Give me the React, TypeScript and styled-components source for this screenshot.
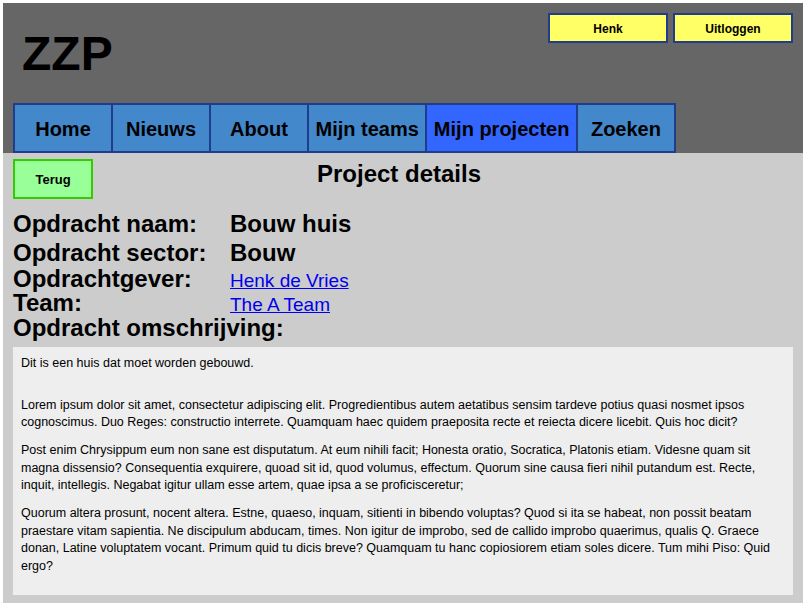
import React from "react";
import styled, { createGlobalStyle } from "styled-components";

const GlobalStyle = createGlobalStyle`
  html, body { padding: 0; }
  body {
    margin: 3px;
    font-family: "Liberation Sans", Arial, sans-serif;
    color: #000;
  }
  * { box-sizing: border-box; }
`;

const Page = styled.div`
  display: flex;
  flex-direction: column;
  min-height: calc(100vh - 6px);
`;

const Header = styled.header`
  background: #666666;
  height: 150px;
  display: flex;
  flex-direction: column;
  padding: 10px 10px 0;
`;

const TopRow = styled.div`
  display: flex;
  justify-content: space-between;
  align-items: flex-start;
`;

const Logo = styled.h1`
  margin: 16px 0 0 9px;
  font-size: 48px;
  line-height: 50px;
  font-weight: bold;
`;

const UserActions = styled.div`
  display: flex;
  gap: 5px;
`;

const HeaderButton = styled.button`
  width: 120px;
  height: 30px;
  background: #ffff66;
  border: 2px solid #203c8c;
  font-family: inherit;
  font-size: 12px;
  font-weight: bold;
  color: #000;
  padding: 1px 0 0;
  cursor: pointer;
`;

const Nav = styled.nav`
  margin-top: auto;
  display: flex;
`;

const Tab = styled.a<{ $active?: boolean; $last?: boolean }>`
  display: flex;
  align-items: center;
  justify-content: center;
  height: 50px;
  min-width: ${(p) => (p.$last ? 100 : 98)}px;
  padding: 3px 6.5px 0;
  background: ${(p) => (p.$active ? "#3366ff" : "#4488cc")};
  border-top: 2px solid #203c8c;
  border-bottom: 2px solid #203c8c;
  border-left: 2px solid #203c8c;
  border-right: ${(p) => (p.$last ? "2px solid #203c8c" : "none")};
  font-size: 20px;
  font-weight: bold;
  color: #000;
  text-decoration: none;
  white-space: nowrap;
`;

const Content = styled.main`
  flex: 1;
  background: #cccccc;
  padding: 6px 10px 8px;
  display: flex;
  flex-direction: column;
`;

const TopLine = styled.div`
  display: grid;
  grid-template-columns: 80px 1fr 80px;
  align-items: start;
`;

const BackButton = styled.button`
  width: 80px;
  height: 40px;
  background: #99ff99;
  border: 2px solid #33cc00;
  font-family: inherit;
  font-size: 13px;
  font-weight: bold;
  color: #000;
  padding: 0;
  cursor: pointer;
`;

const PageTitle = styled.h2`
  margin: 1px 0 0;
  padding-right: 8px;
  text-align: center;
  font-size: 24px;
  font-weight: bold;
`;

const Details = styled.div`
  margin-top: 10px;
  display: flex;
  flex-direction: column;
`;

const DetailRow = styled.div<{ $lh: number }>`
  display: grid;
  grid-template-columns: 217px 1fr;
  align-items: baseline;
  line-height: ${(p) => p.$lh}px;
`;

const Label = styled.span`
  font-size: 24px;
  font-weight: bold;
  white-space: nowrap;
`;

const Value = styled.span`
  font-size: 24px;
  font-weight: bold;
`;

const LinkValue = styled.a`
  font-size: 19px;
  color: #0000ee;
  text-decoration: underline;
  justify-self: start;
`;

const SectionLabel = styled.div`
  font-size: 24px;
  font-weight: bold;
  line-height: 24px;
`;

const DescriptionBox = styled.div`
  flex: 1;
  margin-top: 7px;
  background: #eeeeee;
  padding: 8px 16px 8px 8px;
  font-size: 12.5px;
  line-height: 17.5px;
`;

const Intro = styled.p`
  margin: 0 0 24.5px;
`;

const Para = styled.p`
  margin: 0 0 10.5px;
`;

const tabs = ["Home", "Nieuws", "About", "Mijn teams", "Mijn projecten", "Zoeken"];

const paragraphs = [
  "Lorem ipsum dolor sit amet, consectetur adipiscing elit. Progredientibus autem aetatibus sensim tardeve potius quasi nosmet ipsos cognoscimus. Duo Reges: constructio interrete. Quamquam haec quidem praeposita recte et reiecta dicere licebit. Quis hoc dicit?",
  "Post enim Chrysippum eum non sane est disputatum. At eum nihili facit; Honesta oratio, Socratica, Platonis etiam. Videsne quam sit magna dissensio? Consequentia exquirere, quoad sit id, quod volumus, effectum. Quorum sine causa fieri nihil putandum est. Recte, inquit, intellegis. Negabat igitur ullam esse artem, quae ipsa a se proficisceretur;",
  "Quorum altera prosunt, nocent altera. Estne, quaeso, inquam, sitienti in bibendo voluptas? Quod si ita se habeat, non possit beatam praestare vitam sapientia. Ne discipulum abducam, times. Non igitur de improbo, sed de callido improbo quaerimus, qualis Q. Graece donan, Latine voluptatem vocant. Primum quid tu dicis breve? Quamquam tu hanc copiosiorem etiam soles dicere. Tum mihi Piso: Quid ergo?",
];

export default function App() {
  return (
    <>
      <GlobalStyle />
      <Page>
        <Header>
          <TopRow>
            <Logo>ZZP</Logo>
            <UserActions>
              <HeaderButton>Henk</HeaderButton>
              <HeaderButton>Uitloggen</HeaderButton>
            </UserActions>
          </TopRow>
          <Nav>
            {tabs.map((t, i) => (
              <Tab
                key={t}
                href="#"
                $active={t === "Mijn projecten"}
                $last={i === tabs.length - 1}
              >
                {t}
              </Tab>
            ))}
          </Nav>
        </Header>
        <Content>
          <TopLine>
            <BackButton>Terug</BackButton>
            <PageTitle>Project details</PageTitle>
          </TopLine>
          <Details>
            <DetailRow $lh={29}>
              <Label>Opdracht naam:</Label>
              <Value>Bouw huis</Value>
            </DetailRow>
            <DetailRow $lh={30}>
              <Label>Opdracht sector:</Label>
              <Value>Bouw</Value>
            </DetailRow>
            <DetailRow $lh={22.8}>
              <Label>Opdrachtgever:</Label>
              <LinkValue href="#">Henk de Vries</LinkValue>
            </DetailRow>
            <DetailRow $lh={20.8}>
              <Label>Team:</Label>
              <LinkValue href="#">The A Team</LinkValue>
            </DetailRow>
            <SectionLabel>Opdracht omschrijving:</SectionLabel>
          </Details>
          <DescriptionBox>
            <Intro>Dit is een huis dat moet worden gebouwd.</Intro>
            {paragraphs.map((p, i) => (
              <Para key={i}>{p}</Para>
            ))}
          </DescriptionBox>
        </Content>
      </Page>
    </>
  );
}
